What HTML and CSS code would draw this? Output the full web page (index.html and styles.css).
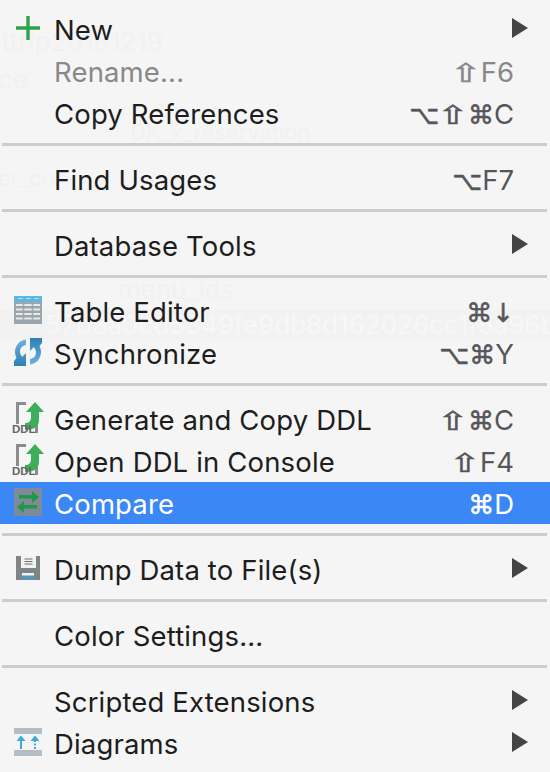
FILE: index.html
```html
<!DOCTYPE html>
<html lang="en">
<head>
<meta charset="utf-8">
<title>Context menu</title>
<link rel="stylesheet" href="styles.css">
</head>
<body>
<div class="backdrop" aria-hidden="true">
  <span class="ghost g1">ttrip20161219</span>
  <span class="ghost g2">ce</span>
  <span class="ghost g3">DK_x_reservation</span>
  <span class="ghost g4">er_cor</span>
  <span class="ghost g5">menu_ids</span>
  <div class="ghost-band"></div>
  <span class="ghost g6">57b8a0cd5349fe9db8d162026cc1f5a96b6</span>
</div>
<ul class="menu">
  <li class="item"><span class="icon"><svg viewBox="0 0 28 28"><path d="M14 2v24M2 14h24" stroke="#2ea24a" stroke-width="3.400"/></svg></span><span class="label">New</span><span class="arrow"></span></li>
  <li class="item disabled"><span class="icon"></span><span class="label">Rename...</span><span class="keys"><span class="sym wide">⇧</span>F6</span></li>
  <li class="item"><span class="icon"></span><span class="label">Copy References</span><span class="keys"><span class="sym">⌥</span><span class="sym wide">⇧</span><span class="sym">⌘</span>C</span></li>
  <li class="sep"></li>
  <li class="item"><span class="icon"></span><span class="label">Find Usages</span><span class="keys"><span class="sym">⌥</span>F7</span></li>
  <li class="sep"></li>
  <li class="item"><span class="icon"></span><span class="label">Database Tools</span><span class="arrow"></span></li>
  <li class="sep"></li>
  <li class="item"><span class="icon"><svg viewBox="0 0 28 28"><rect width="28" height="28" fill="#9aa5ac"/><rect width="28" height="6" fill="#5cb8e0"/><path d="M4 2.500h5M12 2.500h5M20 2.500h5" stroke="#b5e0f2" stroke-width="1.200"/><path d="M2 9h24M2 13.500h24M2 18h24M2 22.500h24" stroke="#e6e8ea" stroke-width="2"/><path d="M9.500 7v19M18.500 7v19" stroke="#9aa5ac" stroke-width="1.500"/></svg></span><span class="label">Table Editor</span><span class="keys"><span class="sym">⌘↓</span></span></li>
  <li class="item"><span class="icon"><svg viewBox="0 0 28 28"><defs><linearGradient id="sync" x1="0" y1="0" x2="0" y2="1"><stop offset="0" stop-color="#6cb2de"/><stop offset="1" stop-color="#2f7fb5"/></linearGradient></defs><path id="half" d="M12 1.500C5 2.500 1 8 1 14c0 2 .5 4 1.500 6L0 23v5h12V15l-4 4c-1-2-2-3.500-2-5.500C6 10 8.500 7.500 12 7z" fill="url(#sync)"/><path d="M12 1.500C5 2.500 1 8 1 14c0 2 .5 4 1.500 6L0 23v5h12V15l-4 4c-1-2-2-3.500-2-5.500C6 10 8.500 7.500 12 7z" fill="url(#sync)" transform="rotate(180 14 14)"/></svg></span><span class="label">Synchronize</span><span class="keys"><span class="sym">⌥⌘</span>Y</span></li>
  <li class="sep"></li>
  <li class="item"><span class="icon"><svg class="tall" viewBox="0 0 32 32"><path d="M4 0h10v3H7v19H4z" fill="#8c8c8c"/><rect x="23" y="22" width="3" height="9" fill="#8c8c8c"/><path d="M23 0l9 10h-5v8c0 7-6 10-14 10v-7c4 0 6-2 6-6v-5h-5z" fill="#3fae5a"/><text x="0" y="31" class="ddl">DDL</text></svg></span><span class="label">Generate and Copy DDL</span><span class="keys"><span class="sym wide">⇧</span><span class="sym">⌘</span>C</span></li>
  <li class="item"><span class="icon"><svg class="tall" viewBox="0 0 32 32"><path d="M4 0h10v3H7v19H4z" fill="#8c8c8c"/><rect x="23" y="22" width="3" height="9" fill="#8c8c8c"/><path d="M23 0l9 10h-5v8c0 7-6 10-14 10v-7c4 0 6-2 6-6v-5h-5z" fill="#3fae5a"/><text x="0" y="31" class="ddl">DDL</text></svg></span><span class="label">Open DDL in Console</span><span class="keys"><span class="sym wide">⇧</span>F4</span></li>
  <li class="item active"><span class="icon"><svg viewBox="0 0 28 28"><rect width="28" height="28" fill="#7d8a9a"/><path d="M5 7h13V3l7 6-7 6v-4.500H5z" fill="#1e9a46"/><path d="M23 17H10v-4l-7 6 7 6v-4.500h13z" fill="#1e9a46"/></svg></span><span class="label">Compare</span><span class="keys"><span class="sym">⌘</span>D</span></li>
  <li class="sep"></li>
  <li class="item"><span class="icon"><svg viewBox="-2 -2 28 28"><rect width="24" height="24" fill="#7f8487"/><rect x="5" width="15" height="12" fill="#f2f2f2"/><path d="M8.500 3h8M8.500 5.500h8M8.500 8h8" stroke="#6e6e6e"/><rect x="6" y="17" width="12" height="7" fill="#f2f2f2"/><rect x="6" y="19.500" width="12" height="4.500" fill="#5b95b5"/></svg></span><span class="label">Dump Data to File(s)</span><span class="arrow"></span></li>
  <li class="sep"></li>
  <li class="item"><span class="icon"></span><span class="label">Color Settings...</span></li>
  <li class="sep"></li>
  <li class="item"><span class="icon"></span><span class="label">Scripted Extensions</span><span class="arrow"></span></li>
  <li class="item"><span class="icon"><svg viewBox="0 0 28 28"><rect width="28" height="6" fill="#b4bcc4"/><rect y="22" width="28" height="6" fill="#b4bcc4"/><path d="M7 21V10" stroke="#3fa9e0" stroke-width="2"/><path d="M21 21V10" stroke="#3fa9e0" stroke-width="2" stroke-dasharray="2 1.500"/><path d="M2.500 13L7 7.500l4.500 5.500zM16.500 13L21 7.500l4.500 5.500z" fill="#3fa9e0"/></svg></span><span class="label">Diagrams</span><span class="arrow"></span></li>
</ul>
</body>
</html>
```
FILE: styles.css
```css
* { box-sizing: border-box; }
html, body { margin: 0; padding: 0; }
body {
  position: relative;
  width: 550px;
  height: 772px;
  overflow: hidden;
  background: #f5f5f5;
  font-family: Inter, "Liberation Sans", sans-serif;
  color: #1d1d20;
}
.backdrop { position: absolute; inset: 0; }
.ghost {
  position: absolute;
  font-size: 26px;
  line-height: 30px;
  color: #f1f1f1;
  white-space: nowrap;
}
.g1 { left: 2px; top: 27px; }
.g2 { left: -2px; top: 65px; }
.g3 { left: 130px; top: 117px; font-size: 22px; }
.g4 { left: -2px; top: 163px; font-size: 22px; }
.g5 { left: 118px; top: 275px; }
.g6 { left: 45px; top: 310px; color: #f7f7f7; }
.ghost-band { position: absolute; left: 0; right: 0; top: 310px; height: 30px; background: #f2f2f3; }
.menu {
  position: relative;
  list-style: none;
  margin: 0;
  padding: 8px 0 0;
}
.item {
  display: flex;
  align-items: center;
  height: 42px;
  padding-right: 22px;
}
.icon {
  flex: none;
  width: 55px;
  height: 42px;
  display: flex;
  align-items: center;
  padding-left: 14px;
}
.icon svg { display: block; width: 28px; height: 28px; margin-top: -2px; overflow: visible; }
.icon svg.tall { width: 32px; height: 32px; margin-left: -2px; }
.label {
  flex: 1;
  align-self: flex-start;
  margin-left: -1px;
  font-size: 27.5px;
  letter-spacing: 0.15px;
  line-height: 44px;
  white-space: nowrap;
}
.keys {
  align-self: flex-start;
  font-size: 27.5px;
  line-height: 44px;
  color: #56565a;
  white-space: nowrap;
  margin-right: 14px;
}
.sym { font-family: "DejaVu Sans", sans-serif; font-size: 26px; -webkit-text-stroke: 0.5px currentColor; }
.wide { display: inline-block; transform: scaleX(1.45); margin: 0 4px 0 3px; }
.arrow {
  flex: none;
  width: 0;
  height: 0;
  margin-bottom: 3px;
  border-left: 16px solid #444446;
  border-top: 10px solid transparent;
  border-bottom: 10px solid transparent;
}
.disabled .label, .disabled .keys { color: #88888a; }
.active { background: #3b87f6; }
.active .label, .active .keys { color: #fff; }
.sep {
  height: 24px;
  padding: 9px 0 0 2px;
}
.sep::before {
  content: "";
  display: block;
  width: 545px;
  height: 3px;
  background: #cdcdcd;
}
.ddl { font-family: "Liberation Sans", sans-serif; font-weight: 700; font-size: 11.5px; fill: #666; }
```
